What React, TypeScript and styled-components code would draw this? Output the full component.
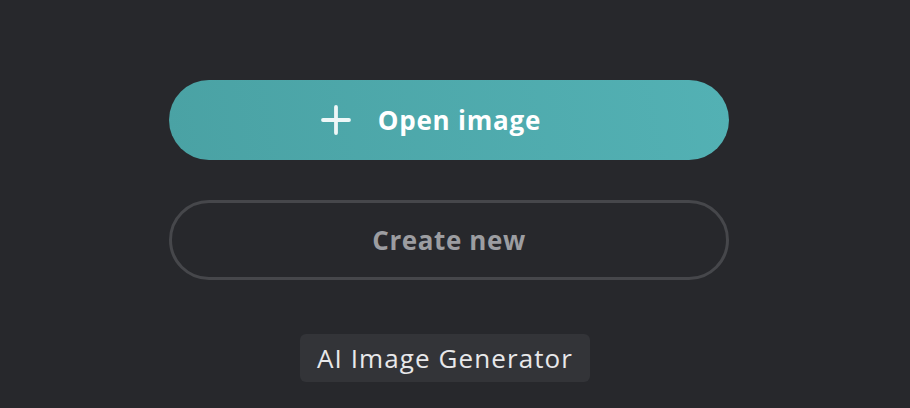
import React from "react";
import styled, { createGlobalStyle } from "styled-components";

const Global = createGlobalStyle`
  html, body { margin: 0; padding: 0; background: #27282c; }
  body { font-family: "Open Sans", "Noto Sans", sans-serif; }
`;

const Page = styled.div`
  width: 910px;
  height: 408px;
  background: #27282c;
  display: flex;
  flex-direction: column;
  align-items: flex-start;
  padding: 80px 0 0 169px;
  box-sizing: border-box;
`;

const Column = styled.div`
  width: 560px;
  display: flex;
  flex-direction: column;
  align-items: center;
  gap: 40px;
`;

const PrimaryButton = styled.button`
  width: 560px;
  height: 80px;
  border: none;
  border-radius: 40px;
  background: linear-gradient(80deg, #4aa2a4 0%, #53b1b4 100%);
  color: #ffffff;
  display: flex;
  align-items: center;
  justify-content: center;
  gap: 27px;
  font-family: "Open Sans", sans-serif;
  font-weight: 700;
  font-size: 26px;
  letter-spacing: 0.8px;
  cursor: pointer;
  padding: 0 36px 0 0;
`;

const SecondaryButton = styled.button`
  width: 560px;
  height: 80px;
  border: 3px solid #46474b;
  border-radius: 40px;
  background: transparent;
  color: #9c9da1;
  font-family: "Open Sans", sans-serif;
  font-weight: 700;
  font-size: 26px;
  letter-spacing: 0.6px;
  box-sizing: border-box;
  cursor: pointer;
`;

const Chip = styled.div`
  margin-top: 14px;
  margin-left: -8px;
  height: 48px;
  width: 290px;
  box-sizing: border-box;
  border-radius: 6px;
  background: #333438;
  color: #e8e8ea;
  font-family: "Open Sans", sans-serif;
  font-size: 26px;
  font-weight: 400;
  letter-spacing: 1.1px;
  white-space: nowrap;
  display: flex;
  align-items: center;
  justify-content: center;
`;

const Plus = () => (
  <svg width="30" height="30" viewBox="0 0 30 30" fill="none">
    <path d="M15 2v26M2 15h26" stroke="#eef7f7" strokeWidth="3.8" strokeLinecap="round" />
  </svg>
);

export default function App() {
  return (
    <>
      <Global />
      <Page>
        <Column>
          <PrimaryButton>
            <Plus />
            <span>Open image</span>
          </PrimaryButton>
          <SecondaryButton>Create new</SecondaryButton>
          <Chip>AI Image Generator</Chip>
        </Column>
      </Page>
    </>
  );
}
